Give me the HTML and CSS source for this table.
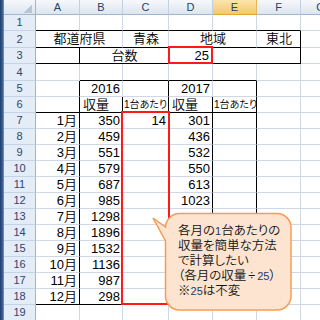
FILE: index.html
```html
<!DOCTYPE html>
<html lang="ja">
<head>
<meta charset="utf-8">
<title>Sheet</title>
<link rel="stylesheet" href="styles.css">
</head>
<body>
<div class="window">
  <div class="frame"></div>
  <div class="sheet">
    <div class="corner"><span class="tri"></span></div>
    <div class="ch">A</div><div class="ch">B</div><div class="ch">C</div><div class="ch">D</div><div class="ch sel">E</div><div class="ch">F</div><div class="ch">G</div>

    <div class="rh">1</div>
    <div class="c bb"></div><div class="c bb"></div><div class="c bb"></div><div class="c bb"></div><div class="c bb"></div><div class="c bb"></div><div class="c"></div>

    <div class="rh">2</div>
    <div class="c s2 bb m up">都道府県</div><div class="c bb m up">青森</div><div class="c s2 bb m up">地域</div><div class="c bb br m up">東北</div><div class="c"></div>

    <div class="rh">3</div>
    <div class="c bb br"></div><div class="c s2 bb m">台数</div><div class="c bb r num3">25</div><div class="c s2 bb br"></div><div class="c"></div>

    <div class="rh">4</div>
    <div class="c"></div><div class="c bb"></div><div class="c bb"></div><div class="c bb"></div><div class="c bb"></div><div class="c"></div><div class="c"></div>

    <div class="rh">5</div>
    <div class="c br"></div><div class="c r">2016</div><div class="c br"></div><div class="c r">2017</div><div class="c br"></div><div class="c"></div><div class="c"></div>

    <div class="rh">6</div>
    <div class="c br bb"></div><div class="c br bb">収量</div><div class="c br bb sm">1台あたり</div><div class="c br bb">収量</div><div class="c br bb sm">1台あたり</div><div class="c"></div><div class="c"></div>

    <div class="rh">7</div>
    <div class="c br r">1月</div><div class="c r">350</div><div class="c r">14</div><div class="c br r">301</div><div class="c br"></div><div class="c"></div><div class="c"></div>

    <div class="rh">8</div>
    <div class="c br r">2月</div><div class="c r">459</div><div class="c"></div><div class="c br r">436</div><div class="c br"></div><div class="c"></div><div class="c"></div>

    <div class="rh">9</div>
    <div class="c br r">3月</div><div class="c r">551</div><div class="c"></div><div class="c br r">532</div><div class="c br"></div><div class="c"></div><div class="c"></div>

    <div class="rh">10</div>
    <div class="c br r">4月</div><div class="c r">579</div><div class="c"></div><div class="c br r">550</div><div class="c br"></div><div class="c"></div><div class="c"></div>

    <div class="rh">11</div>
    <div class="c br r">5月</div><div class="c r">687</div><div class="c"></div><div class="c br r">613</div><div class="c br"></div><div class="c"></div><div class="c"></div>

    <div class="rh">12</div>
    <div class="c br r">6月</div><div class="c r">985</div><div class="c"></div><div class="c br r">1023</div><div class="c br"></div><div class="c"></div><div class="c"></div>

    <div class="rh">13</div>
    <div class="c br r">7月</div><div class="c r">1298</div><div class="c"></div><div class="c br"></div><div class="c br"></div><div class="c"></div><div class="c"></div>

    <div class="rh">14</div>
    <div class="c br r">8月</div><div class="c r">1896</div><div class="c"></div><div class="c br"></div><div class="c br"></div><div class="c"></div><div class="c"></div>

    <div class="rh">15</div>
    <div class="c br r">9月</div><div class="c r">1532</div><div class="c"></div><div class="c br"></div><div class="c br"></div><div class="c"></div><div class="c"></div>

    <div class="rh">16</div>
    <div class="c br r">10月</div><div class="c r">1136</div><div class="c"></div><div class="c br"></div><div class="c br"></div><div class="c"></div><div class="c"></div>

    <div class="rh">17</div>
    <div class="c br r">11月</div><div class="c r">987</div><div class="c"></div><div class="c br"></div><div class="c br"></div><div class="c"></div><div class="c"></div>

    <div class="rh">18</div>
    <div class="c br bb r">12月</div><div class="c bb r">298</div><div class="c bb"></div><div class="c br bb"></div><div class="c br bb"></div><div class="c"></div><div class="c"></div>

    <div class="rh">19</div>
    <div class="c"></div><div class="c"></div><div class="c"></div><div class="c"></div><div class="c"></div><div class="c"></div><div class="c"></div>

    <div class="mark mark-d3"></div>
    <div class="mark mark-c"></div>
  </div>

  <div class="callout">
    <svg class="bubble" width="146" height="108" viewBox="150 206 146 108">
      <path d="M179.5 213.5 H277 A14 14 0 0 1 291 227.5 V296 A14 14 0 0 1 277 310 H179.5 A14 14 0 0 1 165.5 296 V241 L153 218 L165.5 227 A14 14 0 0 1 179.5 213.5 Z" fill="#fde4d0" stroke="#f59d56" stroke-width="1.5"/>
    </svg>
    <div class="note">
      <div>各月の<span class="n">1</span>台あたりの</div>
      <div>収量を簡単な方法</div>
      <div>で計算したい</div>
      <div>（各月の収量<span class="op">÷</span><span class="n">25</span>）</div>
      <div>※<span class="n">25</span>は不変</div>
    </div>
  </div>
</div>
</body>
</html>
```
FILE: styles.css
```css
html, body {
  margin: 0;
  padding: 0;
  background: #ffffff;
}
body {
  width: 320px;
  height: 320px;
  overflow: hidden;
}
.window {
  position: relative;
  display: flex;
  width: 320px;
  height: 320px;
  overflow: hidden;
}
.frame {
  flex: none;
  width: 4px;
  background: linear-gradient(to right, #1f3d6b, #3a5d91 60%, #7d9bc9);
}
.sheet {
  position: relative;
  flex: none;
  display: grid;
  grid-template-columns: 32px 44px 43px 46px 44px 44px 44px 40px;
  grid-template-rows: 15px 16px 17px 16px 17px 16px 16px repeat(13, 16px);
}
.corner {
  box-sizing: border-box;
  background: linear-gradient(#f6f8fb, #dde5ef);
  border-right: 1px solid #9eb6ce;
  border-bottom: 1px solid #9eb6ce;
  display: flex;
  justify-content: flex-end;
  align-items: flex-end;
  padding: 0 3px 1px 0;
}
.tri {
  width: 9px;
  height: 9px;
  background: linear-gradient(135deg, transparent 50%, #b7c5d7 50%);
}
.ch {
  box-sizing: border-box;
  background: linear-gradient(#f6f8fb, #dde5ef);
  border-right: 1px solid #c3d0e0;
  border-bottom: 1px solid #9eb6ce;
  font: 11px/14px "Liberation Sans", Arial, sans-serif;
  color: #27416a;
  text-align: center;
}
.ch.sel {
  background: linear-gradient(#fbe5ad, #f5c86a);
  border-right-color: #e7b657;
  border-bottom-color: #e0a838;
}
.rh {
  box-sizing: border-box;
  background: #e4ecf7;
  border-right: 1px solid #9eb6ce;
  border-bottom: 1px solid #c5d3e6;
  font: 11px/15px "Liberation Sans", Arial, sans-serif;
  color: #2c4670;
  display: flex;
  justify-content: center;
  align-items: center;
}
.c {
  box-sizing: border-box;
  border-right: 1px solid #d0d7e5;
  border-bottom: 1px solid #d0d7e5;
  font-family: "Liberation Sans", "Noto Sans CJK JP", sans-serif;
  font-size: 13px;
  font-weight: 350;
  line-height: 12px;
  font-feature-settings: "palt";
  color: #000;
  display: flex;
  align-items: flex-end;
  padding: 0 2px 1px 3px;
  white-space: nowrap;
}
.c.up { padding-bottom: 2px; }
.c.num3 { padding-right: 3px; }
.c.r { justify-content: flex-end; }
.c.m { justify-content: center; }
.c.s2 { grid-column: span 2; }
.c.bb { border-bottom-color: #000; }
.c.br { border-right-color: #000; }
.c.sm {
  font-size: 10px;
  line-height: 11px;
  align-items: flex-start;
  padding: 2px 0 0 1px;
  letter-spacing: 0;
}
.mark {
  position: absolute;
  box-sizing: border-box;
  border: 2px solid #ff1a1a;
}
.mark-d3 {
  grid-column: 5 / 6;
  grid-row: 4 / 5;
  top: -2px;
  left: -1px;
  right: 0;
  bottom: 0;
}
.mark-c {
  grid-column: 4 / 5;
  grid-row: 8 / 20;
  top: -2px;
  left: -2px;
  right: -1px;
  bottom: 0;
}
.callout {
  position: absolute;
  left: 150px;
  top: 206px;
  width: 146px;
  height: 108px;
}
.bubble {
  position: absolute;
  left: 0;
  top: 0;
}
.note {
  position: relative;
  padding: 18px 0 0 28px;
  font-family: "Liberation Sans", "Noto Sans CJK JP", sans-serif;
  font-size: 12.5px;
  font-weight: 350;
  line-height: 15px;
  font-feature-settings: "palt";
  color: #111;
  white-space: nowrap;
}
.op {
  margin: 0 2px;
}
.n {
  font-size: 11px;
  color: #1f3a6e;
}
```
